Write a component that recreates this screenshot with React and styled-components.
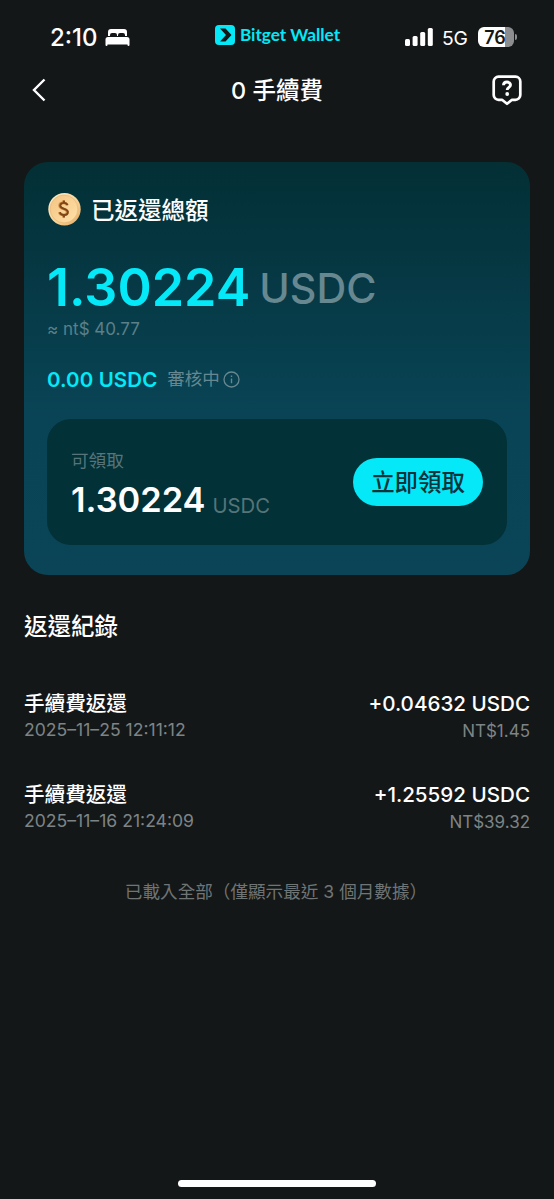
import React from "react";
import styled, { createGlobalStyle } from "styled-components";

const GlobalStyle = createGlobalStyle`
  * {
    box-sizing: border-box;
  }

  body {
    margin: 0;
    background: #141718;
    color: #fff;
    font-family: Inter, "Noto Sans CJK TC", sans-serif;
  }
`;

// screen and bars
const Screen = styled.div`
  display: flex;
  flex-direction: column;
  width: 554px;
  height: 1199px;
  overflow: hidden;
`;

const StatusBar = styled.div`
  display: grid;
  grid-template-columns: 1fr auto 1fr;
  height: 60px;
  padding: 0 37px 0 50px;
`;

const StatusLeft = styled.div`
  display: flex;
  align-items: center;
  gap: 7px;
  padding-top: 14px;
  font-size: 24px;
  font-weight: 500;
`;

const Brand = styled.div`
  display: flex;
  align-items: center;
  gap: 5px;
  padding-top: 9px;
  margin-right: 12px;
  color: #04e8f7;
  font-family: Lato, Inter, sans-serif;
  font-size: 17.2px;
  font-weight: 700;
`;

const StatusRight = styled.div`
  display: flex;
  align-items: center;
  justify-content: flex-end;
  padding-top: 14px;

  .network {
    margin: 1px 10px 0 9px;
    font-size: 19.3px;
  }
`;

const Battery = styled.div`
  display: flex;
  align-items: center;
  justify-content: center;
  width: 36px;
  height: 20px;
  border-radius: 6px;
  background: linear-gradient(90deg, #fff 76%, #8b8d8e 76%);
  color: #141718;
  font-size: 18px;
  font-weight: 600;
  padding-right: 2px;
`;

const BatteryTip = styled.div`
  width: 2px;
  height: 6px;
  margin-left: 1px;
  border-radius: 0 3px 3px 0;
  background: #8b8d8e;
`;

const NavBar = styled.header`
  display: grid;
  grid-template-columns: 1fr auto 1fr;
  align-items: center;
  height: 60px;
  padding: 0 32px;

  h1 {
    margin: 0 0 2px;
    font-size: 23.5px;
    font-weight: 500;
  }

  svg:last-child {
    justify-self: end;
  }
`;

// total card
const Card = styled.section`
  display: flex;
  flex-direction: column;
  height: 413px;
  margin: 42px 24px 0;
  padding: 29px 23px;
  border-radius: 24px;
  background: linear-gradient(180deg, #032f35 0%, #094456 62%, #0a4456 100%);
`;

const CardTitle = styled.div`
  display: flex;
  align-items: center;
  gap: 10px;
  height: 36px;
  font-size: 23.5px;
  font-weight: 500;
`;

const Total = styled.div`
  display: flex;
  height: 62px;
  margin-top: 28px;

  strong {
    color: #04e8f7;
    font-size: 52px;
    font-weight: 600;
    line-height: 66px;
  }

  span {
    margin-left: 9px;
    color: #678890;
    font-size: 41.2px;
    font-weight: 500;
    line-height: 66px;
  }
`;

const Approx = styled.div`
  height: 24px;
  color: #5c7f88;
  font-size: 17px;
  line-height: 24px;
`;

const Pending = styled.div`
  display: flex;
  align-items: center;
  height: 28px;
  margin-top: 25px;
  color: #678890;
  font-size: 17.5px;
  line-height: 24px;

  strong {
    margin-right: 10px;
    color: #04e8f7;
    font-size: 20.5px;
    font-weight: 600;
    letter-spacing: 0.1px;
  }

  span {
    margin-bottom: 2px;
  }

  svg {
    margin: 0 0 2px 3px;
  }
`;

const ClaimBox = styled.div`
  display: flex;
  align-items: center;
  justify-content: space-between;
  height: 126px;
  margin-top: 25px;
  padding: 0 24px;
  border-radius: 24px;
  background: #023137;
`;

const ClaimLabel = styled.div`
  height: 26px;
  margin-top: 7px;
  color: #567479;
  font-size: 17.6px;
  line-height: 26px;
`;

const ClaimAmount = styled.div`
  display: flex;
  height: 49px;
  line-height: 51px;

  strong {
    font-size: 34.4px;
    font-weight: 600;
  }

  span {
    margin-left: 7px;
    color: #567479;
    font-size: 20.3px;
    line-height: 63px;
  }
`;

const ClaimButton = styled.button`
  width: 130px;
  height: 48px;
  padding: 0 0 2px;
  border: none;
  border-radius: 24px;
  background: #04e8f7;
  color: #08343a;
  font-family: inherit;
  font-size: 23.4px;
  font-weight: 500;
`;

// refund records
const Records = styled.section`
  display: flex;
  flex-direction: column;
  padding: 0 24px;

  h2 {
    height: 36px;
    margin: 34px 0 44px;
    font-size: 23.5px;
    font-weight: 500;
    line-height: 36px;
  }
`;

const Record = styled.div`
  display: flex;
  justify-content: space-between;
  height: 91px;
`;

const RecordColumn = styled.div`
  text-align: ${(props) => (props.$right ? "right" : "left")};
`;

const RecordMain = styled.div`
  height: 28px;
  font-size: 20.6px;
  font-weight: 500;
  line-height: 29px;
`;

const RecordSub = styled.div`
  height: 26px;
  color: #7d8486;
  font-size: ${(props) => (props.$small ? "17px" : "17.6px")};
  line-height: ${(props) => (props.$small ? "28px" : "26px")};
`;

const EndNote = styled.div`
  height: 26px;
  margin: 8px 2px 0 0;
  color: #6f7475;
  font-size: 17.6px;
  line-height: 26px;
  text-align: center;
`;

const HomeIndicator = styled.div`
  width: 198px;
  height: 7px;
  margin: auto auto 12px;
  border-radius: 4px;
  background: #fff;
`;

// icons
const BedIcon = () => (
  <svg width="25" height="19" viewBox="0 0 25 19" fill="#fff">
    <path d="M3 8V4a3 3 0 0 1 3-3h13a3 3 0 0 1 3 3v4h-2V7a2 2 0 0 0-2-2h-3a2 2 0 0 0-2 2v1h-1V7a2 2 0 0 0-2-2H7a2 2 0 0 0-2 2v1z" />
    <path d="M3 9h19a2.500 2.500 0 0 1 2.500 2.500V17a1 1 0 0 1-2 0v-.5h-20V17a1 1 0 0 1-2 0v-5.500A2.500 2.500 0 0 1 3 9z" />
  </svg>
);

const BrandIcon = () => (
  <svg width="20" height="20" viewBox="0 0 20 20">
    <rect width="20" height="20" rx="4" fill="#04e8f7" />
    <path d="M5 3.500h5.500l6 6.500-6 6.500H5l6-6.500z" fill="#141718" />
  </svg>
);

const SignalIcon = () => (
  <svg width="28" height="18" viewBox="0 0 28 18" fill="#fff">
    <rect x="0" y="11" width="5" height="7" rx="1.500" />
    <rect x="7.600" y="8" width="5" height="10" rx="1.500" />
    <rect x="15.200" y="4" width="5" height="14" rx="1.500" />
    <rect x="22.800" y="0" width="5" height="18" rx="1.500" />
  </svg>
);

const BackIcon = () => (
  <svg width="15" height="24" viewBox="0 0 15 24" fill="none">
    <path d="M12.500 1.500L2 12l10.500 10.500" stroke="#fff" strokeWidth="2.400" />
  </svg>
);

const HelpIcon = () => (
  <svg width="30" height="31" viewBox="0 0 30 31" fill="none" stroke="#fff">
    <path
      d="M6.500 1.700h17a4.800 4.800 0 0 1 4.800 4.800v13.500a4.800 4.800 0 0 1-4.800 4.800H20L15 28.800 10 24.800H6.500a4.800 4.800 0 0 1-4.800-4.800V6.500a4.800 4.800 0 0 1 4.800-4.800z"
      strokeWidth="2.700"
      strokeLinejoin="round"
    />
    <path
      d="M11.500 10.300c0-2.200 1.600-3.300 3.500-3.300s3.500 1.200 3.500 3c0 2.400-3.300 2.400-3.300 5"
      strokeWidth="2.900"
    />
    <circle cx="15.200" cy="19" r="1.900" fill="#fff" stroke="none" />
  </svg>
);

const CoinIcon = () => (
  <svg width="34" height="34" viewBox="0 0 34 34" fill="none">
    <defs>
      <linearGradient id="coinRim" x1="0" y1="0" x2="1" y2="1">
        <stop offset="0" stopColor="#fff0cc" />
        <stop offset="0.600" stopColor="#f8cf8f" />
        <stop offset="1" stopColor="#e3a861" />
      </linearGradient>
      <linearGradient id="coinFace" x1="0" y1="0" x2="1" y2="1">
        <stop offset="0" stopColor="#f3c483" />
        <stop offset="1" stopColor="#ffe0a8" />
      </linearGradient>
    </defs>
    <circle cx="17.500" cy="17.300" r="16.200" fill="url(#coinRim)" />
    <circle cx="17" cy="17" r="13.900" fill="url(#coinFace)" stroke="#e6b578" strokeWidth="0.700" />
    <path
      d="M20.600 13.200c-.5-1.500-1.800-2.300-3.600-2.300-2.100 0-3.700 1.100-3.700 2.900 0 3.800 7.600 2.200 7.600 6.200 0 1.900-1.600 3-3.900 3-2.100 0-3.700-1-4.100-2.700M17 8.500v3M17 22.500v3"
      stroke="#cf8d45"
      strokeWidth="2.600"
      transform="translate(-0.700 0)"
    />
    <path
      d="M20.600 13.200c-.5-1.500-1.800-2.300-3.600-2.300-2.100 0-3.700 1.100-3.700 2.900 0 3.800 7.600 2.200 7.600 6.200 0 1.900-1.600 3-3.900 3-2.100 0-3.700-1-4.100-2.700M17 8.500v3M17 22.500v3"
      stroke="#7d4518"
      strokeWidth="1.900"
    />
  </svg>
);

const InfoIcon = () => (
  <svg width="17" height="17" viewBox="0 0 17 17" fill="none" stroke="#678890">
    <circle cx="8.500" cy="8.500" r="7.500" strokeWidth="1.300" />
    <path d="M8.500 7.500v4.700M8.500 4.500v1.500" strokeWidth="1.400" />
  </svg>
);

const records = [
  { title: "手續費返還", date: "2025–11–25 12:11:12", amount: "+0.04632 USDC", fiat: "NT$1.45" },
  { title: "手續費返還", date: "2025–11–16 21:24:09", amount: "+1.25592 USDC", fiat: "NT$39.32" },
];

const App = () => {
  return (
    <Screen>
      <GlobalStyle />
      <StatusBar>
        <StatusLeft>
          <span>2:10</span>
          <BedIcon />
        </StatusLeft>
        <Brand>
          <BrandIcon />
          <span>Bitget Wallet</span>
        </Brand>
        <StatusRight>
          <SignalIcon />
          <span className="network">5G</span>
          <Battery>76</Battery>
          <BatteryTip />
        </StatusRight>
      </StatusBar>
      <NavBar>
        <BackIcon />
        <h1>0 手續費</h1>
        <HelpIcon />
      </NavBar>
      <Card>
        <CardTitle>
          <CoinIcon />
          <span>已返還總額</span>
        </CardTitle>
        <Total>
          <strong>1.30224</strong>
          <span>USDC</span>
        </Total>
        <Approx>≈ nt$ 40.77</Approx>
        <Pending>
          <strong>0.00 USDC</strong>
          <span>審核中</span>
          <InfoIcon />
        </Pending>
        <ClaimBox>
          <div>
            <ClaimLabel>可領取</ClaimLabel>
            <ClaimAmount>
              <strong>1.30224</strong>
              <span>USDC</span>
            </ClaimAmount>
          </div>
          <ClaimButton>立即領取</ClaimButton>
        </ClaimBox>
      </Card>
      <Records>
        <h2>返還紀錄</h2>
        {records.map((record) => (
          <Record key={record.date}>
            <RecordColumn>
              <RecordMain>{record.title}</RecordMain>
              <RecordSub>{record.date}</RecordSub>
            </RecordColumn>
            <RecordColumn $right>
              <RecordMain>{record.amount}</RecordMain>
              <RecordSub $small>{record.fiat}</RecordSub>
            </RecordColumn>
          </Record>
        ))}
        <EndNote>已載入全部（僅顯示最近 3 個月數據）</EndNote>
      </Records>
      <HomeIndicator />
    </Screen>
  );
};

export default App;
